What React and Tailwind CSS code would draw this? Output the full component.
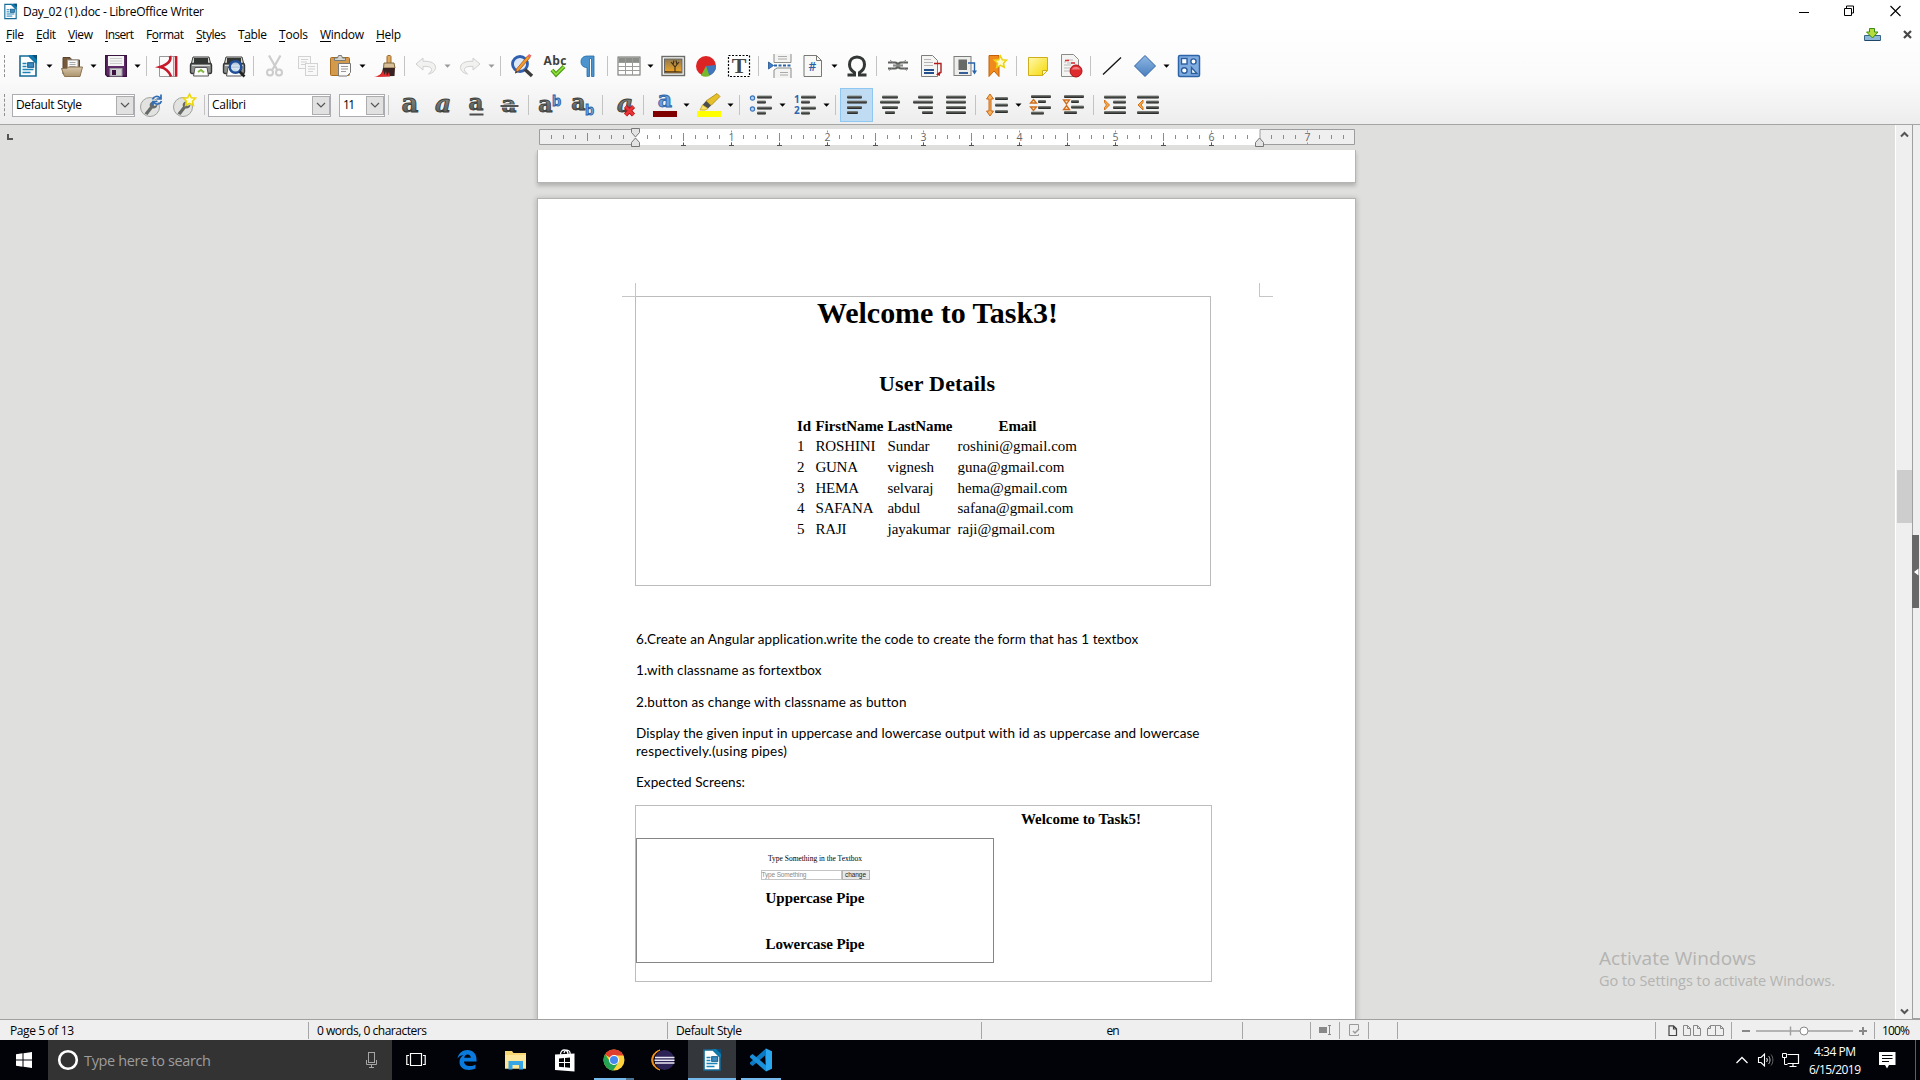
import React, { useLayoutEffect, useRef, useState } from "react";

/* Single line of text spread to an exact width by adjusting its tracking. */
function Fit({ w, className = "", children }) {
  const ref = useRef(null);
  const [ls, setLs] = useState(0);
  useLayoutEffect(() => {
    const el = ref.current;
    el.style.letterSpacing = "0px";
    const n = el.textContent.length;
    const next = (w - el.getBoundingClientRect().width) / Math.max(1, n - 1);
    el.style.letterSpacing = next + "px";
    setLs(next);
  }, [w]);
  return (
    <span className={"block whitespace-nowrap " + className} style={{ width: w }}>
      <span ref={ref} style={{ letterSpacing: ls }}>{children}</span>
    </span>
  );
}

const Svg = ({ w = 24, h = 24, className = "", children }) => (
  <svg width={w} height={h} viewBox={`0 0 ${w} ${h}`} className={"shrink-0 overflow-visible " + className} fill="none">{children}</svg>
);

const Gradients = () => (
  <svg width="0" height="0" className="absolute">
    <defs>
      <linearGradient id="bar" x1="0" y1="0" x2="0" y2="1"><stop offset="0" stopColor="#8d918c" /><stop offset=".5" stopColor="#4c4f4b" /><stop offset="1" stopColor="#1c1e1b" /></linearGradient>
      <linearGradient id="letter" x1="0" y1="0" x2="0" y2="1"><stop offset="0" stopColor="#9b9f9b" /><stop offset="1" stopColor="#4c504e" /></linearGradient>
      <linearGradient id="blue" x1="0" y1="0" x2="0" y2="1"><stop offset="0" stopColor="#8fb8e4" /><stop offset="1" stopColor="#4a7fbe" /></linearGradient>
      <linearGradient id="yellow" x1="0" y1="0" x2="1" y2="1"><stop offset="0" stopColor="#fff9b0" /><stop offset="1" stopColor="#f5d800" /></linearGradient>
      <linearGradient id="sunset" x1="0" y1="0" x2="0" y2="1"><stop offset="0" stopColor="#8f7a50" /><stop offset="1" stopColor="#f7a823" /></linearGradient>
      <linearGradient id="tan" x1="0" y1="0" x2="0" y2="1"><stop offset="0" stopColor="#d8c6a8" /><stop offset="1" stopColor="#ab946f" /></linearGradient>
    </defs>
  </svg>
);

/* ---------- toolbar icons ---------- */
const WriterDoc = ({ s = 24 }) => (
  <svg width={s} height={s} viewBox="0 0 24 24" fill="none" className="shrink-0">
    <path d="M4 2h9l7 7v13H4z" fill="#fff" stroke="#156a96" strokeWidth="1.6" />
    <path d="M12 1h9v9z" fill="#0f7ab0" /><path d="M16 1h5v5z" fill="#0b4f78" />
    <path d="M6.5 9.500h4M6.500 12.500h4M6.500 15.500h11M6.500 18.500h8" stroke="#1b83b8" strokeWidth="1.4" />
    <rect x="11.700" y="8.700" width="6" height="4.600" fill="#3d8bc0" stroke="#0e5a85" />
  </svg>
);
const Folder = () => (
  <Svg><path d="M3 20V3.500h7l2 2.500h7.500V20z" fill="#75593a" stroke="#5c442a" /><rect x="7.500" y="6" width="10.500" height="11" fill="#f8f8f6" stroke="#999" /><path d="M9.500 8.500h6M9.500 10.500h6M9.500 12.500h6" stroke="#aaa" /><path d="M1.500 14.500h5.500l1.500-1.500h14L20 22.500H4.500z" fill="url(#tan)" stroke="#8b7554" /></Svg>
);
const Save = () => (
  <Svg><path d="M1.700 1.700h20.600v20.600H3.500l-1.800-1.800z" fill="#5e2a66" stroke="#3a1340" strokeWidth="1.400" /><rect x="4" y="2" width="16" height="10" fill="#f4f4f4" /><path d="M6 4.500h12M6 7h12M6 9.500h12" stroke="#ccc" /><rect x="6" y="14.500" width="12" height="7.500" fill="#cfcfd2" stroke="#9a9a9f" /><rect x="8" y="16" width="4" height="5" fill="#3a1340" /></Svg>
);
const Pdf = () => (
  <Svg><path d="M3.500 2.500h17.500v20h-17.500z" fill="#fafafa" stroke="#999" /><path d="M14 2c1.500 4-1 8-10 11 5 1 9 4 11 9.500" stroke="#c8192b" strokeWidth="2.600" /><path d="M20 2v20.500" stroke="#c8192b" strokeWidth="2.400" /><path d="M17.500 3v19" stroke="#d66" strokeWidth=".8" /></Svg>
);
const PrinterArt = () => (
  <g><path d="M4 3h16l2 8H2z" fill="#d8d8d5" stroke="#3c3f3d" /><rect x="5" y="4" width="14" height="5" fill="#333734" /><rect x="1.500" y="9.500" width="21" height="10" rx="1.500" fill="#8d908c" stroke="#343735" strokeWidth="1.400" /><path d="M3 11.500h18" stroke="#ddd" /><path d="M6 13.500h12l1.500 8.500h-15z" fill="#fcfcfc" stroke="#555" /><path d="M9 18l3-2 3 2.500" stroke="#7eb83c" strokeWidth="2" /></g>
);
const Printer = () => <Svg><PrinterArt /></Svg>;
const Preview = () => <Svg><PrinterArt /><circle cx="13.500" cy="13" r="5.800" fill="#cfe0f5" fillOpacity=".85" stroke="#1f4e9c" strokeWidth="2.400" /><path d="M17.500 17.500l5 5" stroke="#222" strokeWidth="2.600" /></Svg>;
const Cut = () => (
  <Svg className="opacity-35"><path d="M6 1.500l8 14M17.500 1.500l-8 14" stroke="#777" strokeWidth="2.200" /><circle cx="7" cy="18.500" r="3" stroke="#777" strokeWidth="2" /><circle cx="16" cy="18.500" r="3" stroke="#777" strokeWidth="2" /></Svg>
);
const Copy = () => (
  <Svg className="opacity-35"><rect x="2.500" y="2.500" width="12" height="12" fill="#f6f6f6" stroke="#888" /><path d="M5 5.500h7M5 8h6M5 10.500h4" stroke="#888" /><rect x="9.500" y="9.500" width="12" height="12" fill="#f6f6f6" stroke="#888" /><path d="M12 12.500h7M12 15h7M12 17.500h5" stroke="#888" /></Svg>
);
const Paste = () => (
  <Svg><rect x="1.500" y="3.500" width="19" height="18" rx="1" fill="#d49a4c" stroke="#a86c1e" /><path d="M5.500 6.500V4h3l1-2.500h3l1 2.500h3v2.500z" fill="#d3d5d1" stroke="#777a76" /><path d="M9.500 9.500h12v9l-3.500 3.500H9.500z" fill="#fbfbfa" stroke="#777" /><path d="M12 12.500h7M12 15h7M12 17.500h5" stroke="#999" /></Svg>
);
const Brush = () => (
  <Svg><path d="M14 2.500c0-1.500 4-1.500 4 0v7h-4z" fill="#e0a860" stroke="#9c6a28" /><path d="M11 9h10l1 5H10.500z" fill="#d8c09a" stroke="#7d6540" /><path d="M10 14h12l-.5 8-17 .5c3-1.500 5-4 5.500-8.500z" fill="#3a2222" /><path d="M1 23c6-1.200 8.500-4 9-7l1.500 5 1.500-4 1 5 2-4 1 4.500z" fill="#e62a2e" /></Svg>
);
const Undo = ({ flip }) => (
  <Svg className={"opacity-40 " + (flip ? "-scale-x-100" : "")}><path d="M9 4l-7 6 7 6v-3.500c6-.5 8.500 1 8.500 3s-1.500 3-3 4.500c5-1 7-4 7-6.500 0-4-4-6.500-12.500-6.300z" fill="#e3e4e1" stroke="#8d908c" /></Svg>
);
const Find = () => (
  <Svg><circle cx="10" cy="10" r="7.500" fill="#dce8f6" stroke="#2f5fae" strokeWidth="2.800" /><path d="M15 15.500l7 6.500" stroke="#3b3b3b" strokeWidth="3.400" /><path d="M20 3.500l-11 13-3.500 2.500 1-4 11-13z" fill="#f39a2c" stroke="#a9541a" strokeWidth=".8" /><path d="M17.500 2l2.500 1.700 1.500-2.200L19 0z" fill="#e66" /><path d="M6 17l-1 2.500L8 18z" fill="#333" /></Svg>
);
const Spell = () => (
  <Svg w={28}><text x="14" y="11" textAnchor="middle" fontFamily="Open Sans, sans-serif" fontWeight="700" fontSize="12" textLength="23" fill="#3b3f3d">Abc</text><path d="M11 16l4 4.500 8-8" stroke="#4a9a14" strokeWidth="4" /><path d="M11 16l4 4.500 8-8" stroke="#8fdd3a" strokeWidth="1.800" /></Svg>
);
const Pilcrow = () => <Svg><path d="M18 2v20.500h-2.500V4.500h-2V22.500H11V13.500C6.500 13.500 5 10.500 5 7.700 5 4 7.500 2 11.500 2z" fill="#4d94cf" stroke="#1f6aa8" strokeWidth=".8" /></Svg>;
const TableIcon = () => (
  <Svg><rect x="1" y="3" width="22" height="18" fill="#fff" stroke="#6a6c68" /><rect x="1.500" y="3.500" width="21" height="4.500" fill="#8b8d88" /><path d="M1 8.500h22M1 12.500h22M1 16.500h22M8.500 3v18M15.500 3v18" stroke="#9a9c98" /></Svg>
);
const Picture = () => (
  <Svg><rect x="1" y="2.500" width="22.500" height="19" fill="#f5f5f2" stroke="#6c6c68" strokeWidth="1.400" /><rect x="3.500" y="5" width="17.500" height="14" fill="url(#sunset)" stroke="#666" /><path d="M14 18v-5l-4-5M14 13l4-5M12 10.500l1-4M16 10.500l-1-4" stroke="#3f2c14" strokeWidth="1.100" /><path d="M4 18.500h16.500v-1c-6-.5-10 0-16.500-.5z" fill="#4a3519" /></Svg>
);
const Pie = () => (
  <Svg><circle cx="12" cy="12" r="10" fill="#dc2424" /><path d="M12 12V22A10 10 0 0 0 22 11z" fill="#3f77bd" /><path d="M12 12L7 21.500a10.500 10.500 0 0 0 8.500 .5z" fill="#78b82c" /></Svg>
);
const TextBox = () => (
  <Svg><rect x="1.500" y="1.500" width="21" height="21" stroke="#000" strokeWidth="1.200" strokeDasharray="2 1.500" fill="#fff" /><text x="12" y="19" textAnchor="middle" fontFamily="Liberation Serif, serif" fontWeight="700" fontSize="22" fill="#454846">T</text></Svg>
);
const PageBreak = () => (
  <Svg><path d="M6 0v8.500h17V0M6 24v-8l3-2h14v10" fill="#f4f4f2" stroke="#8a8c88" /><path d="M10 2.500h9M10 5h9M12 18.500h8M12 21h8" stroke="#aaa" /><path d="M6 11.500h17" stroke="#2b63a8" strokeWidth="2" strokeDasharray="3 1.500" /><path d="M.5 8l5 3.500-5 3.500z" fill="#3f7fc8" stroke="#1f4f90" strokeWidth=".8" /></Svg>
);
const HashPage = () => (
  <Svg><path d="M3 1.500h12.500l5 5v16H3z" fill="#f8f8f7" stroke="#777975" /><path d="M15.500 1.500v5h5" stroke="#777975" /><text x="11.500" y="17" textAnchor="middle" fontFamily="Open Sans, sans-serif" fontWeight="600" fontSize="12" fill="#2860a8">#</text></Svg>
);
const Omega = () => <Svg><path d="M2.500 21h7v-2.500C6 16.500 4.500 14 4.500 10.500 4.500 6 7.500 3 12 3s7.500 3 7.500 7.500c0 3.500-1.500 6-5 8V21h7" stroke="#333735" strokeWidth="3" /></Svg>;
const Link = () => (
  <Svg><path d="M2 8.500h7c3.500 0 3.500 6 0 6H2M22 8.500h-7c-3.500 0-3.500 6 0 6h7" stroke="#5d605d" strokeWidth="2.200" /><path d="M7 11.500h10" stroke="#8a8c8a" strokeWidth="2.200" /><path d="M4 6l3 2.500M20 6l-3 2.500M3 16.500l3-2M21 16.500l-3-2" stroke="#888" /></Svg>
);
const Footnote = () => (
  <Svg><path d="M2.500 1.500h11l5 5v16h-16z" fill="#f5f5f3" stroke="#7c7e7b" /><path d="M5 5.500h7M5 8.500h9M5 11.500h9" stroke="#b5b5b5" /><path d="M5 16h10M5 19h10" stroke="#234f8d" strokeWidth="1.800" /><path d="M15 9.500h7v9l-3 2" stroke="#b31b1b" strokeWidth="1.400" /><path d="M17 20.500l4-3v4.500z" fill="#b31b1b" /></Svg>
);
const Endnote = () => (
  <Svg><rect x="2" y="2.500" width="17" height="19" fill="#eeeeec" stroke="#7c7e7b" /><rect x="6.500" y="5.500" width="8.500" height="10.500" fill="#686a68" /><path d="M7 19h9" stroke="#234f8d" strokeWidth="1.800" /><path d="M16 9h6.500v9" stroke="#2b63a8" strokeWidth="1.400" /><path d="M20 16.500h5l-2.500 4z" fill="#2b63a8" /></Svg>
);
const STAR = "M0-6L1.800-2.200 6-1.800 3 1.200 3.800 5.300 0 3.300-3.800 5.300-3 1.200-6-1.800-1.800-2.200z";
const Bookmark = () => <Svg><path d="M4 1.500h10v21l-5-5.500-5 5.500z" fill="#f08a1d" stroke="#c2610b" /><path d={STAR} transform="translate(15.500 8)" fill="#fffbd0" stroke="#edd412" strokeWidth="1.600" /></Svg>;
const Note = () => <Svg><path d="M2.500 3.500h19v13l-5 5h-14z" fill="url(#yellow)" stroke="#cfae1c" /><path d="M21.500 16.500l-5 5v-5z" fill="#fffbcc" stroke="#cfae1c" /></Svg>;
const Track = () => (
  <Svg><path d="M2.500.5h12l5 5v17h-17z" fill="#f4f4f3" stroke="#8a8c88" /><path d="M5 8h2M8 6h6M8 9h8M5 11h7M5 14h6M5 17h5" stroke="#bbb" /><path d="M6 6.500h4M12 9h4" stroke="#d33" strokeWidth="1.400" /><circle cx="17" cy="17" r="6" fill="#df2a30" stroke="#ad1218" /><path d="M12.500 15.500a5 5 0 0 1 9 0z" fill="#f08080" /></Svg>
);
const LineIcon = () => <Svg><path d="M3 20.500L21 3.500" stroke="#111" strokeWidth="1.300" /></Svg>;
const Diamond = () => <Svg><path d="M12 1.500L22.500 12 12 22.500 1.500 12z" fill="url(#blue)" stroke="#2f64a5" /></Svg>;
const Shapes = () => (
  <Svg><rect x="1.500" y="1.500" width="21" height="21" rx="1.500" fill="#80ace0" stroke="#2d64a8" strokeWidth="1.500" /><g fill="#fff" stroke="#2c5f9f" strokeWidth="1.400"><rect x="4.500" y="4.500" width="5.500" height="5.500" /><circle cx="16.500" cy="7.500" r="2.600" /><circle cx="7.300" cy="16.500" r="2.800" /><path d="M14.500 13.500v6H20z" /></g></Svg>
);

/* ---------- formatting icons ---------- */
const Letter = ({ x = 12, y = 19, size = 26, italic, fill = "url(#letter)", stroke = "#3b3e3c", children = "a" }) => (
  <text x={x} y={y} textAnchor="middle" fontFamily="DejaVu Serif, serif" fontWeight="700" fontStyle={italic ? "italic" : "normal"} fontSize={size} fill={fill} stroke={stroke} strokeWidth=".9">{children}</text>
);
const Wrench = ({ star }) => (
  <Svg w={26}><circle cx="11" cy="14" r="9.500" fill="#e2e3e1" stroke="#a0a29f" /><path d="M5.500 20.500l5.500-7c-1-3 1-5 3.500-5L13.500 11l2 2 3-1.500c0 3-2.500 4.500-5 4l-5 6.500z" fill="#666a67" />
    {star ? <path d={STAR} transform="translate(17.500 7)" fill="#fffce0" stroke="#ecd70c" strokeWidth="1.600" /> : <path d="M13.500 6.500c1-3.500 5.500-4 7.500-1.500M22 1.500V6h-4.500M22.500 8c-1 3.500-5.500 4-7.500 1.500M14 12.500V8.500h4" stroke="#2f6bb4" strokeWidth="1.700" />}
  </Svg>
);
const Bold = () => <Svg><Letter size={26} /></Svg>;
const Italic = () => <Svg><Letter italic x={12} size={25} /></Svg>;
const Underline = () => <Svg><Letter y={16.500} size={23} /><path d="M5.500 21.500h14" stroke="#4b4e4c" strokeWidth="2" /></Svg>;
const Strike = () => <Svg><Letter y={18.500} size={23} /><path d="M3.500 13h18" stroke="#fff" strokeWidth="3" /><path d="M3.500 13h18" stroke="#3d403e" strokeWidth="1.800" /></Svg>;
const Script = ({ sub }) => <Svg><Letter x={7.500} y={sub ? 17 : 19} size={22} /><text x="18.500" y={sub ? 22 : 13} textAnchor="middle" fontFamily="Liberation Sans, sans-serif" fontWeight="700" fontSize="15" fill="#7fa9dc" stroke="#2c62a8" strokeWidth=".9">b</text></Svg>;
const Clear = () => <Svg><Letter italic x={13} y={19} size={25} /><path d="M13.500 13.500l8 8.500M21.500 13.500L13.500 22" stroke="#a80f14" strokeWidth="4.200" /><path d="M13.500 13.500l8 8.500M21.500 13.500L13.500 22" stroke="#ea3237" strokeWidth="2.600" /></Svg>;
const FontColor = () => <Svg><Letter y={14} size={22} fill="#6f9fd8" stroke="#2c62a8" /><path d="M0 18h24v6H0z" fill="#800000" /></Svg>;
const Highlight = () => <Svg><path d="M20 .5l3 3-9 9-5-4.500z" fill="#e6c02a" stroke="#a8860e" strokeWidth=".8" /><path d="M9 8l5 4.500-3 3-5.500-3.500z" fill="#4a4d4b" /><path d="M5.500 12l5.500 3.500-3 1.500H3z" fill="#f7e36a" stroke="#c3a11b" strokeWidth=".8" /><path d="M0 18h24v6H0z" fill="#ff0" /></Svg>;
const Bars = ({ rows }) => rows.map(([x, y, w], i) => <rect key={i} x={x} y={y} width={w} height="3" rx="1" fill="url(#bar)" />);
const Bullets = () => <Svg><circle cx="3.500" cy="5" r="2.100" fill="#bcd4f0" stroke="#3d76bd" strokeWidth="1.200" /><circle cx="3.500" cy="16" r="2.100" fill="#bcd4f0" stroke="#3d76bd" strokeWidth="1.200" /><Bars rows={[[8, 2.5, 15], [8, 7.5, 9], [8, 13.5, 15], [8, 18.500, 9]]} /></Svg>;
const Numbers = () => <Svg><g fontFamily="Open Sans, sans-serif" fontWeight="700" fontSize="10" fill="#2f66ad"><text x="1" y="9.500">1</text><text x="1" y="20.500">2</text></g><Bars rows={[[8, 2.5, 15], [8, 7.5, 9], [8, 13.5, 15], [8, 18.500, 9]]} /></Svg>;
const AlignL = () => <Svg><Bars rows={[[2, 2.5, 15], [2, 7.5, 20], [2, 13, 15], [2, 18, 11]]} /></Svg>;
const AlignC = () => <Svg><Bars rows={[[4, 2.5, 16], [2, 7.5, 20], [4, 13, 16], [7, 18, 10]]} /></Svg>;
const AlignR = () => <Svg><Bars rows={[[7, 2.5, 15], [2, 7.5, 20], [7, 13, 15], [11, 18, 11]]} /></Svg>;
const AlignJ = () => <Svg><Bars rows={[[2, 2.5, 20], [2, 7.5, 20], [2, 13, 20], [2, 18, 20]]} /></Svg>;
const Spacing = () => <Svg><path d="M5 1l3.500 5H6v12h2.500L5 23l-3.500-5H4V6H1.500z" fill="#f9b25c" stroke="#c8691a" /><Bars rows={[[10, 4, 13], [10, 10.500, 13], [10, 17, 13]]} /></Svg>;
const ParaInc = () => <Svg><path d="M4.500 6.500l3 3.500h-6zM4.500 17.500l-3-3.500h6z" fill="#fde3c0" stroke="#cf6d1c" strokeWidth="1.300" /><Bars rows={[[2, 2, 20], [9, 7, 8], [9, 13, 13], [2, 18.500, 13]]} /></Svg>;
const ParaDec = () => <Svg><path d="M4.500 11l-3-4h6zM4.500 12.500l3 4h-6z" fill="#fde3c0" stroke="#cf6d1c" strokeWidth="1.300" /><Bars rows={[[2, 2, 20], [9, 7, 8], [9, 12.500, 13], [2, 18, 13]]} /></Svg>;
const Indent = ({ out }) => <Svg><path d={out ? "M7 7l-5 5 5 5v-2.500L5 12l2-2.500z" : "M1.500 7l5 5-5 5v-2.500L3.500 12l-2-2.500z"} fill="#f9a845" stroke="#d2731d" /><Bars rows={[[1, 2.5, 22], [10, 7.500, 13], [10, 13, 13], [1, 18, 22]]} /></Svg>;

/* ---------- toolbar parts ---------- */
const Tool = ({ active, children }) => <span className={"flex h-[34px] w-[33px] shrink-0 items-center justify-center " + (active ? "border border-[#8ec8f2] bg-[#c0dcf3]" : "")}>{children}</span>;
const Drop = ({ dim, children }) => (
  <span className="flex h-[34px] w-11 shrink-0 items-center">
    <span className="flex w-[33px] justify-center">{children}</span>
    <Svg w={11} h={10}><path d="M2.500 3.500h6l-3 3.200z" fill={dim ? "#999" : "#000"} /></Svg>
  </span>
);
const Sep = () => <span className="ml-[3px] mr-1 h-5 w-px shrink-0 bg-[#c3c3c3]" />;
const Grip = () => <span className="ml-1 mr-1.5 h-[22px] w-0 shrink-0 border-l border-dashed border-[#8f8f8f]" />;
const Combo = ({ className, w, children }) => (
  <span className={"flex h-[23px] shrink-0 items-center justify-between border border-[#abadb3] bg-white pl-[3px] " + className}>
    <Fit w={w} className="text-[12px]">{children}</Fit>
    <span className="flex h-[19px] w-[18px] items-center justify-center border border-[#adadad] bg-[#e1e1e1]">
      <Svg w={10} h={8}><path d="M1 2l4 4 4-4" stroke="#555" strokeWidth="1.200" /></Svg>
    </span>
  </span>
);

const MENUS = [["", "F", "ile", 18], ["", "E", "dit", 20], ["", "V", "iew", 25], ["", "I", "nsert", 29], ["F", "o", "rmat", 38], ["", "S", "tyles", 30], ["T", "a", "ble", 29], ["", "T", "ools", 29], ["", "W", "indow", 44], ["", "H", "elp", 25]];

function Header() {
  return (
    <header className="h-[125px] shrink-0 border-b border-[#a5a5a5] bg-gradient-to-b from-white from-20% via-[#fafafa] via-65% to-[#ededed]">
      <div className="flex h-6 items-center">
        <span className="ml-0.5 mr-1 pb-0.5"><WriterDoc s={17} /></span>
        <Fit w={181} className="pb-px text-[12px]">Day_02 (1).doc - LibreOffice Writer</Fit>
        <div className="ml-auto mr-[19px] flex items-center gap-[35px] pb-[3px]">
          <Svg w={10} h={12}><path d="M0 7.500h10" stroke="#000" /></Svg>
          <Svg w={11} h={12}><path d="M.5 3.500h7v7h-7zM2.500 3v-2h7v7H8" stroke="#000" /></Svg>
          <Svg w={11} h={12}><path d="M.5 1l10 10M10.500 1l-10 10" stroke="#000" strokeWidth="1.100" /></Svg>
        </div>
      </div>
      <div className="flex h-[22px] items-center pl-1.5 text-[12px]">
        <nav className="flex gap-3">
          {MENUS.map(([pre, key, post, w]) => (
            <Fit key={key + post} w={w}>{pre}<span className="inline-block border-b border-black leading-[13px]">{key}</span>{post}</Fit>
          ))}
        </nav>
        <div className="ml-auto mr-2 flex items-center gap-[22px] pb-px">
          <Svg w={17} h={14}><path d="M.5 7.500h16v5H.5z" fill="#8db7d8" stroke="#3a6688" /><path d="M1 12.500h15" stroke="#1f4666" /><path d="M5.500.5h5V4h3.500l-5.500 6L2.500 4h3z" fill="#b4dc3c" stroke="#3a8c14" /></Svg>
          <Svg w={9} h={9}><path d="M1 1l7 7M8 1L1 8" stroke="#484848" strokeWidth="2.200" /></Svg>
        </div>
      </div>
      <div className="flex h-10 items-center">
        <Grip />
        <Drop><WriterDoc /></Drop><Drop><Folder /></Drop><Drop><Save /></Drop><Sep />
        <Tool><Pdf /></Tool><Tool><Printer /></Tool><Tool><Preview /></Tool><Sep />
        <Tool><Cut /></Tool><Tool><Copy /></Tool><Drop><Paste /></Drop><Tool><Brush /></Tool><Sep />
        <Drop dim><Undo /></Drop><Drop dim><Undo flip /></Drop><Sep />
        <Tool><Find /></Tool><Tool><Spell /></Tool><Tool><Pilcrow /></Tool><Sep />
        <Drop><TableIcon /></Drop><Tool><Picture /></Tool><Tool><Pie /></Tool><Tool><TextBox /></Tool><Sep />
        <Tool><PageBreak /></Tool><Drop><HashPage /></Drop><Tool><Omega /></Tool><Sep />
        <Tool><Link /></Tool><Tool><Footnote /></Tool><Tool><Endnote /></Tool><Tool><Bookmark /></Tool><Sep />
        <Tool><Note /></Tool><Tool><Track /></Tool><Sep />
        <Tool><LineIcon /></Tool><Drop><Diamond /></Drop><Tool><Shapes /></Tool>
      </div>
      <div className="flex h-[38px] items-center">
        <Grip />
        <Combo className="ml-px w-[123px]" w={66}>Default Style</Combo>
        <Tool><Wrench /></Tool><Tool><Wrench star /></Tool><Sep />
        <Combo className="-ml-px w-[123px]" w={34}>Calibri</Combo>
        <Combo className="ml-2 w-[46px]" w={12}>11</Combo><Sep />
        <Tool><Bold /></Tool><Tool><Italic /></Tool><Tool><Underline /></Tool><Tool><Strike /></Tool><Sep />
        <Tool><Script /></Tool><Tool><Script sub /></Tool><Sep />
        <Tool><Clear /></Tool><Sep />
        <Drop><FontColor /></Drop><Drop><Highlight /></Drop><Sep />
        <Drop><Bullets /></Drop><Drop><Numbers /></Drop><Sep />
        <Tool active><AlignL /></Tool><Tool><AlignC /></Tool><Tool><AlignR /></Tool><Tool><AlignJ /></Tool><Sep />
        <Drop><Spacing /></Drop><Tool><ParaInc /></Tool><Tool><ParaDec /></Tool><Sep />
        <Tool><Indent /></Tool><Tool><Indent out /></Tool>
      </div>
    </header>
  );
}

/* Ruler: 96px per inch, zero at x = 98. */
function Ruler() {
  const ticks = [];
  for (let i = -7; i <= 59; i++) {
    const x = 98 + i * 12;
    if (i === 0 || i === 52 || x > 812) continue;
    if (i > 0 && i % 8 === 0) {
      ticks.push(<path key={i} d={`M${x - 0.5} 1.500v2M${x - 0.5} 13.500v2`} stroke="#999" />);
      ticks.push(<text key={"n" + i} x={x - 0.5} y="12" textAnchor="middle" fontSize="10.500" fontFamily="Open Sans, sans-serif" fill="#666">{i / 8}</text>);
    } else {
      const tall = i % 4 === 0;
      ticks.push(<path key={i} d={`M${x - 0.5} ${tall ? 4 : 6}v${tall ? 8 : 4}`} stroke="#8c8c8c" />);
    }
    if (i > 0 && i % 4 === 0 && i <= 48) ticks.push(<path key={"t" + i} d={`M${x - 3} 16.500h5M${x - 0.5} 13.500v3`} stroke="#555" />);
  }
  return (
    <Svg w={818} h={20} className="ml-[538px]">
      <rect x="98" y="0" width="624" height="16" fill="#fff" />
      <path d="M97 .5H1.500v15H97M722 .5h94.500v15H722z" fill="#efefef" stroke="#9d9d9d" />
      {ticks}
      <path d="M93.500-.5h8v4l-4 4.500-4-4.500zM93.500 17.500h8v-4l-4-4.500-4 4.500z" fill="#e3e3e3" stroke="#777" />
      <path d="M717.500 17.500h8v-4l-4-4.500-4 4.500z" fill="#e3e3e3" stroke="#777" />
    </Svg>
  );
}

const USERS = [
  ["1", "ROSHINI", 60, "Sundar", 42, "roshini@gmail.com", 119.5],
  ["2", "GUNA", 42.5, "vignesh", 46.5, "guna@gmail.com", 107],
  ["3", "HEMA", 43.5, "selvaraj", 46, "hema@gmail.com", 110],
  ["4", "SAFANA", 58, "abdul", 33, "safana@gmail.com", 116],
  ["5", "RAJI", 31, "jayakumar", 63, "raji@gmail.com", 97.5],
];

function Page() {
  return (
    <article className="mt-[15px] h-[822px] w-[819px] shrink-0 border border-[#b4b4b2] bg-white pt-[84px] shadow-[0_1px_5px_1px_rgba(0,0,0,0.18)]">
      <div className="ml-[84px] flex gap-[623px]">
        <span className="h-[14px] w-[14px] border-b border-r border-[#c6c6c6]" />
        <span className="h-[14px] w-[14px] border-b border-l border-[#c6c6c6]" />
      </div>
      <div className="-mt-px ml-[97px] w-[624px]">
        <section className="h-[290px] w-[576px] border border-[#bcbcbc] font-['Liberation_Serif',serif] text-black">
          <Fit w={241} className="ml-[181px] mt-px text-[30px] font-bold leading-[30px]">Welcome to Task3!</Fit>
          <Fit w={116} className="ml-[243px] mt-[42px] text-[22px] font-bold leading-[28px]">User Details</Fit>
          <div className="ml-[161px] mt-[17.600px] grid w-[300px] grid-cols-[18.500px_72px_70px_120px] text-[15px] leading-[20.700px]">
            <Fit w={14} className="font-bold">Id</Fit>
            <Fit w={68} className="font-bold">FirstName</Fit>
            <Fit w={65} className="font-bold">LastName</Fit>
            <Fit w={38} className="ml-[41px] font-bold">Email</Fit>
            {USERS.map(([id, f, fw, l, lw, m, mw]) => (
              <React.Fragment key={id}>
                <span>{id}</span><Fit w={fw}>{f}</Fit><Fit w={lw}>{l}</Fit><Fit w={mw}>{m}</Fit>
              </React.Fragment>
            ))}
          </div>
        </section>
        <div className="ml-px mt-[44px] font-['Lato','Noto_Sans',sans-serif] text-[13.500px] leading-[18px] text-black">
          <Fit w={502.5}>6.Create an Angular application.write the code to create the form that has 1 textbox</Fit>
          <Fit w={185.5} className="mt-[13px]">1.with classname as fortextbox</Fit>
          <Fit w={269.5} className="mt-[14px]">2.button as change with classname as button</Fit>
          <Fit w={563.5} className="mt-[13px]">Display the given input in uppercase and lowercase output with id as uppercase and lowercase</Fit>
          <Fit w={151}>respectively.(using pipes)</Fit>
          <Fit w={109} className="mt-[13px]">Expected Screens:</Fit>
        </div>
        <section className="mt-[14px] h-[177px] w-[577px] border border-[#bcbcbc] pt-[3px] font-['Liberation_Serif',serif] text-[15px] leading-5 text-black">
          <Fit w={120} className="ml-[385px] font-bold">Welcome to Task5!</Fit>
          <div className="mt-[9px] flex h-[125px] w-[358px] flex-col items-center border border-[#868686] pt-[15px]">
            <Fit w={94} className="text-[7.500px] leading-[10px]">Type Something in the Textbox</Fit>
            <div className="mt-[6px] flex h-[10px] w-[109px] font-['Liberation_Sans',sans-serif] leading-[8px]">
              <span className="w-[81px] border border-[#c4c4c4] text-[6.500px] text-[#8a8a8a]"><Fit w={45}>Type Something</Fit></span>
              <span className="flex w-7 justify-center border border-[#b5b5b5] bg-[#e8e8e8] text-[6.500px] text-[#222]"><Fit w={21}>change</Fit></span>
            </div>
            <Fit w={99} className="mt-[7.500px] font-bold">Uppercase Pipe</Fit>
            <Fit w={99} className="mt-[26px] font-bold">Lowercase Pipe</Fit>
          </div>
        </section>
      </div>
    </article>
  );
}

function Workspace() {
  return (
    <div className="flex min-h-0 flex-1">
      <main className="relative flex w-[1895px] flex-col overflow-hidden bg-[#dfdfdd]">
        <div className="flex h-[25px] shrink-0 pt-1">
          <Svg w={6} h={6} className="-mr-[13px] ml-[7px] mt-[5px]"><path d="M1 0v5h5" stroke="#555" strokeWidth="2" /></Svg>
          <Ruler />
        </div>
        <div className="ml-[537px] flex min-h-0 flex-1 flex-col">
          <div className="h-[33px] w-[819px] shrink-0 border border-t-0 border-[#b4b4b2] bg-white shadow-[0_3px_4px_0_rgba(0,0,0,0.2)]" />
          <Page />
        </div>
        <div className="absolute bottom-[28px] left-[1599px] text-[#b3b3b1]">
          <Fit w={157} className="text-[19px] leading-[26px]">Activate Windows</Fit>
          <Fit w={236} className="text-[14.500px] leading-5">Go to Settings to activate Windows.</Fit>
        </div>
      </main>
      <div className="flex w-[17px] flex-col items-center border-l border-white bg-[#efefef] pb-1 pt-1.5">
        <Svg w={9} h={7}><path d="M1 5.500l3.500-3.500L8 5.500" stroke="#555" strokeWidth="2" /></Svg>
        <span className="mt-[332px] h-[53px] w-[15px] bg-[#cdcdcd]" />
        <Svg w={9} h={7} className="mt-auto"><path d="M1 1.500L4.500 5 8 1.500" stroke="#555" strokeWidth="2" /></Svg>
      </div>
      <div className="relative flex w-2 flex-col border-b border-l border-[#a0a0a0] bg-[#efefef]">
        <span className="-ml-px mt-[410px] flex h-[73px] w-[7px] items-center justify-end bg-[#686868]">
          <Svg w={6} h={8}><path d="M5.500.5v7L1 4z" fill="#fff" /></Svg>
        </span>
      </div>
    </div>
  );
}

const Bar = () => <span className="h-[17px] w-px shrink-0 bg-[#a6a6a6]" />;

function StatusBar() {
  return (
    <footer className="flex h-[21px] shrink-0 items-center border-t border-[#a0a0a0] bg-[#efefef] text-[12px] leading-4 text-black">
      <span className="flex w-[308px] pl-2.5 pt-px"><Fit w={64}>Page 5 of 13</Fit></span><Bar />
      <span className="flex w-[358px] pl-2 pt-px"><Fit w={110}>0 words, 0 characters</Fit></span><Bar />
      <span className="flex w-[313px] pl-2 pt-px"><Fit w={66}>Default Style</Fit></span><Bar />
      <span className="flex w-[260px] justify-center pl-0.5 pt-px"><Fit w={13}>en</Fit></span><Bar />
      <span className="w-[67px]" /><Bar />
      <span className="flex w-7 justify-center"><Svg w={13} h={12}><path d="M0 3h8v6H0z" fill="#888" /><path d="M9 1.500h3M9 10.500h3M10.500 1.500v9" stroke="#888" /></Svg></span><Bar />
      <span className="flex w-7 justify-center"><Svg w={12} h={13}><path d="M10.500 5V.5h-9v11h9V10" stroke="#999" /><path d="M5 7l2 2 4-4" stroke="#999" strokeWidth="1.500" /></Svg></span><Bar />
      <span className="w-7" /><Bar />
      <span className="w-[257px]" /><Bar />
      <span className="flex w-[75px] items-center gap-[6px] pl-3">
        <Svg w={9} h={11}><path d="M1 .800h4.500l3 3v6.700H1zM5.500 1v3h3" stroke="#444" strokeWidth="1.200" /></Svg>
        <Svg w={18} h={11}><path d="M.5.500h4l3 3v7h-7zM4.500.5v3h3M10.500.500h4l3 3v7h-7zM14.500.5v3h3" stroke="#888" /></Svg>
        <Svg w={17} h={11}><path d="M.5 3.500l3-3h5v10h-8zM8.500.500h5l3 3v7h-8M3.500.5v3h-3M13.500.5v3h3" stroke="#888" /></Svg>
      </span><Bar />
      <Svg w={142} h={17}>
        <path d="M10 9h8M127 9h8M131 5v8" stroke="#888" strokeWidth="2" />
        <path d="M24 9h97" stroke="#a0a0a0" strokeWidth="1.500" /><path d="M58.500 4.500v9" stroke="#a0a0a0" strokeWidth="1.500" />
        <circle cx="72" cy="9" r="4" fill="#fff" stroke="#888" />
      </Svg><Bar />
      <span className="pl-[7px] pt-px"><Fit w={28}>100%</Fit></span>
    </footer>
  );
}

/* ---------- taskbar icons ---------- */
const Edge = () => <Svg w={22} h={22}><path d="M1.500 9.500C2.500 4 6.500 1 11.500 1 17 1 20.500 5 20.500 10v2.500H8c.2 3.200 2.800 4.500 5.800 4.500 2.200 0 4-.6 5.700-1.600v4.200C17.700 20.500 15.500 21 13 21 7 21 3.500 17.500 3.500 13c0-3 1.500-5.500 4.200-7C4.500 6.300 2.700 7.500 1.500 9.500zM8.200 8.800h6.600c0-2-1.200-3.300-3.200-3.300-1.800 0-3 1.200-3.400 3.300z" fill="#0a7bdc" /></Svg>;
const Explorer = () => <Svg w={22} h={20}><path d="M0 1h7l1.500 2H21v15.500H0z" fill="#f7d774" /><path d="M0 5h21v13.500H0z" fill="#fce69c" /><path d="M3.500 11h14.500v8.500h-4V15h-6.500v4.500h-4z" fill="#35a5e5" /></Svg>;
const Store = () => <Svg w={22} h={24}><path d="M6.500 6.500c0-6 7.500-6 7.500 0M10 5c1-5 7-3 6 2" stroke="#fff" strokeWidth="1.300" /><path d="M1 6.500l19.500-1V23.500L1 22z" fill="#fff" /><path d="M5 10.500l5-.5v4H5zM11 10l5-.5V14h-5zM5 15h5v4.200l-5-.5zM11 15h5v4.700l-5-.4z" fill="#050608" /></Svg>;
const Chrome = () => <Svg w={22} h={22}><circle cx="11" cy="11" r="10.500" fill="#fdd23a" /><path d="M11 11L2 5.500A10.500 10.500 0 0 1 20.500 6.500H11z" fill="#e03e2f" /><path d="M1.900 5.700A10.500 10.500 0 0 0 10 21.500l5-7.500H8z" fill="#24a354" /><path d="M2 5.500l4 7" stroke="#24a354" /><circle cx="11" cy="11" r="5" fill="#fff" /><circle cx="11" cy="11" r="4" fill="#4688f1" /></Svg>;
const Eclipse = () => <Svg w={24} h={22}><path d="M9 1C-2 4-2 18 9 21-1 15 0 6 9 1z" fill="#f7941e" stroke="#f7941e" /><circle cx="13.500" cy="11" r="10" fill="#2c2255" /><path d="M4 8.500h19.500M3.500 11.300h20M4 14h19.500" stroke="#e7e5f1" strokeWidth="1.400" /></Svg>;
const Code = () => <Svg w={24} h={24}><path d="M17 .500l6 2.700v17.600l-6 2.700-1-22z" fill="#29a8ef" /><path d="M17 .5v6.300L3.500 18 1 16v-1.500z" fill="#0a7ac4" /><path d="M17 23.500v-6.300L3.500 6 1 8v1.500z" fill="#1a90da" /></Svg>;

function Taskbar() {
  return (
    <div className="flex h-10 shrink-0 bg-[#010308] text-white">
      <span className="flex w-12 items-center justify-center">
        <Svg w={16} h={16}><path d="M0 2.200l6.500-.9V7.500H0zM7.500 1.200L16 0v7.500H7.500zM0 8.500h6.500v6.200L0 13.800zM7.500 8.500H16V16l-8.500-1.200z" fill="#fff" /></Svg>
      </span>
      <span className="flex w-[344px] items-center bg-[#333333] pl-[9px] pr-[14px]">
        <Svg w={22} h={22}><circle cx="11" cy="11" r="8.800" stroke="#fff" strokeWidth="2.600" /></Svg>
        <Fit w={127} className="ml-[5px] pt-0.5 text-[14.500px] text-[#9d9d9d]">Type here to search</Fit>
        <Svg w={13} h={18} className="ml-auto"><rect x="3.500" y="1.500" width="6" height="10" stroke="#a5a5a5" /><path d="M1.500 9v4.500h10V9M6.500 13.500v3M4 16.500h5" stroke="#a5a5a5" /></Svg>
      </span>
      <span className="flex w-12 items-center justify-center">
        <Svg w={20} h={16}><path d="M4.500 1.500h11v12h-11z" stroke="#fff" strokeWidth="1.200" /><path d="M3 3.500H.8v9H3M17 3.500h2.200v9H17" stroke="#fff" strokeWidth="1.200" /></Svg>
      </span>
      <span className="flex w-[54px] items-center justify-center"><Edge /></span>
      <span className="flex w-11 items-center justify-center"><Explorer /></span>
      <span className="flex w-[54px] items-center justify-center"><Store /></span>
      <span className="ml-0.5 flex w-10 flex-col items-center justify-between pt-[9px]"><Chrome /><span className="flex h-0.5 w-full bg-[#76b9ed]"><span className="ml-auto w-2 bg-[#4a7394]" /></span></span>
      <span className="ml-1 mr-px flex w-[49px] items-center justify-center"><Eclipse /></span>
      <span className="flex w-12 flex-col items-center justify-between bg-[#33373c] pt-2"><WriterDoc s={24} /><span className="h-0.5 w-full bg-[#76b9ed]" /></span>
      <span className="ml-[5px] flex w-10 flex-col items-center justify-between pt-2"><Code /><span className="h-0.5 w-full bg-[#76b9ed]" /></span>
      <div className="ml-auto flex items-center">
        <Svg w={14} h={10} className="mr-px"><path d="M2.500 8l5.500-5.500L13.500 8" stroke="#fff" strokeWidth="1.300" /></Svg>
        <Svg w={18} h={16} className="ml-2"><path d="M1.500 5.500H4l3.500-3.500v12L4 10.500H1.500z" stroke="#fff" strokeWidth="1.100" /><path d="M9.500 6c1 1 1 3 0 4" stroke="#fff" /><path d="M11.500 4c2 2 2 6 0 8" stroke="#bbb" /><path d="M14 2.500c2.500 3 2.500 8 0 11" stroke="#666" /></Svg>
        <Svg w={18} h={16} className="ml-[7px]"><path d="M5.500 2.500h11v9h-11M11 12v3M7.500 14.500h7" stroke="#fff" strokeWidth="1.200" /><path d="M.500 1.500h4v4h-4zM2.500 5.500v7h3" stroke="#fff" fill="#010308" /></Svg>
        <div className="ml-2 flex w-[54px] flex-col items-center pt-px text-[12px] leading-[18px]">
          <Fit w={42}>4:34 PM</Fit><Fit w={52}>6/15/2019</Fit>
        </div>
        <Svg w={17} h={17} className="ml-[17px]"><path d="M0 0h16.500v13H10l-2 3.500L6 13H0z" fill="#fff" /><path d="M3 3.500h10.500M3 6.500h10.500M3 9.500h7" stroke="#010308" /></Svg>
        <span className="ml-[19px] mr-1 h-10 w-px bg-[#5c5f63]" />
      </div>
    </div>
  );
}

export default function App() {
  return (
    <div className="flex h-[1080px] w-[1920px] flex-col overflow-hidden font-['Open_Sans','Noto_Sans',sans-serif] text-black">
      <Gradients />
      <Header />
      <Workspace />
      <StatusBar />
      <Taskbar />
    </div>
  );
}
